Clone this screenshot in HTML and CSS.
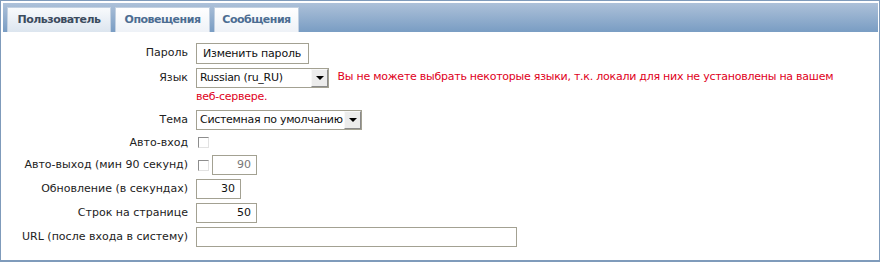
FILE: index.html
```html
<!DOCTYPE html>
<html lang="ru">
<head>
    <meta charset="UTF-8">
    <title>Профиль пользователя</title>
    <link rel="stylesheet" href="styles.css">
</head>
<body>
    <div class="frame">
        <div class="tabs">
            <div class="tab active">Пользователь</div>
            <div class="tab t2">Оповещения</div>
            <div class="tab t3">Сообщения</div>
        </div>
        <div class="form">
            <div class="label">Пароль</div>
            <div class="field"><span class="btn">Изменить пароль</span></div>

            <div class="label">Язык</div>
            <div class="field wrap">
                <span class="select lang"><span class="value">Russian (ru_RU)</span><span class="arrow"></span></span>
                <span class="warn">Вы не можете выбрать некоторые языки, т.к. локали для них не установлены на вашем веб-сервере.</span>
            </div>

            <div class="label">Тема</div>
            <div class="field"><span class="select theme"><span class="value">Системная по умолчанию</span><span class="arrow"></span></span></div>

            <div class="label short">Авто-вход</div>
            <div class="field short"><span class="check"></span></div>

            <div class="label">Авто-выход (мин 90 секунд)</div>
            <div class="field"><span class="check"></span><span class="inp num disabled">90</span></div>

            <div class="label">Обновление (в секундах)</div>
            <div class="field"><span class="inp num">30</span></div>

            <div class="label">Строк на странице</div>
            <div class="field"><span class="inp num wide">50</span></div>

            <div class="label">URL (после входа в систему)</div>
            <div class="field"><span class="inp url"></span></div>
        </div>
    </div>
</body>
</html>
```

FILE: styles.css
```css
*{
    margin:0;
    padding:0;
    box-sizing:border-box;
}
body{
    width:880px;
    height:262px;
    background:#fff;
    font-family:"DejaVu Sans", Verdana, sans-serif;
    font-size:11px;
    color:#222;
}
.frame{
    width:880px;
    height:262px;
    border:1px solid #7f9bbb;
    border-bottom-width:2px;
    padding:2px 1px 0 2px;
}
.tabs{
    height:29px;
    display:flex;
    align-items:flex-end;
    gap:4px;
    padding-left:4px;
    background:linear-gradient(#adc1d9, #7b9ec4);
    border-bottom:1px solid #7b9ec4;
}
.tab{
    height:25px;
    margin-bottom:-1px;
    line-height:24px;
    text-align:center;
    font-weight:bold;
    letter-spacing:-0.5px;
    color:#4c6d92;
    background:linear-gradient(#ffffff, #eef2f7);
    border:1px solid #c3d1e1;
    border-bottom:none;
}
.tab.active{
    color:#3b4b5e;
    background:linear-gradient(#f8fafc, #dce5ef);
    width:104px;
}
.tab.t2{
    width:95px;
}
.tab.t3{
    width:85px;
}
.form{
    display:grid;
    grid-template-columns:185px 1fr;
    column-gap:8px;
    row-gap:4px;
    padding-top:11px;
}
.label{
    text-align:right;
    line-height:20px;
    white-space:nowrap;
}
.label.short, .field.short{
    line-height:17px;
    min-height:17px;
}
.field{
    min-height:20px;
    display:flex;
    align-items:center;
    gap:3px;
}
.field.wrap{
    display:block;
    line-height:18px;
    padding-right:30px;
}
.btn{
    display:inline-block;
    height:21px;
    line-height:19px;
    padding:0 7px 0 6px;
    letter-spacing:-0.2px;
    border:1px solid #a3a192;
    background:#fff;
    color:#111;
}
.select{
    display:inline-flex;
    align-items:center;
    height:20px;
    border:1px solid #a3a192;
    background:#fff;
    vertical-align:top;
    margin-right:5px;
}
.select .value{
    flex:1;
    min-width:0;
    padding-left:3px;
    line-height:18px;
    letter-spacing:-0.3px;
    color:#111;
    white-space:nowrap;
    overflow:hidden;
}
.select.lang{
    width:133px;
}
.select.theme{
    width:166px;
}
.arrow{
    flex:none;
    width:17px;
    height:18px;
    background:#ececec;
    border:1px solid;
    border-color:#f8f8f8 #8a8a8a #8a8a8a #f8f8f8;
    display:flex;
    align-items:center;
    justify-content:center;
}
.arrow::after{
    content:"";
    border-left:4px solid transparent;
    border-right:4px solid transparent;
    border-top:4px solid #000;
}
.warn{
    color:#e0001b;
    letter-spacing:-0.25px;
}
.check{
    width:11px;
    height:11px;
    margin-left:2px;
    border:1px solid;
    border-color:#8d8d8d #e2e2e2 #e2e2e2 #8d8d8d;
    background:#fff;
}
.inp{
    display:inline-block;
    height:20px;
    line-height:18px;
    border:1px solid #a3a192;
    background:#fff;
    color:#111;
}
.inp.num{
    width:45px;
    text-align:right;
    padding-right:5px;
}
.inp.num.wide{
    width:61px;
}
.inp.disabled{
    color:#777;
}
.inp.url{
    width:321px;
}
```
